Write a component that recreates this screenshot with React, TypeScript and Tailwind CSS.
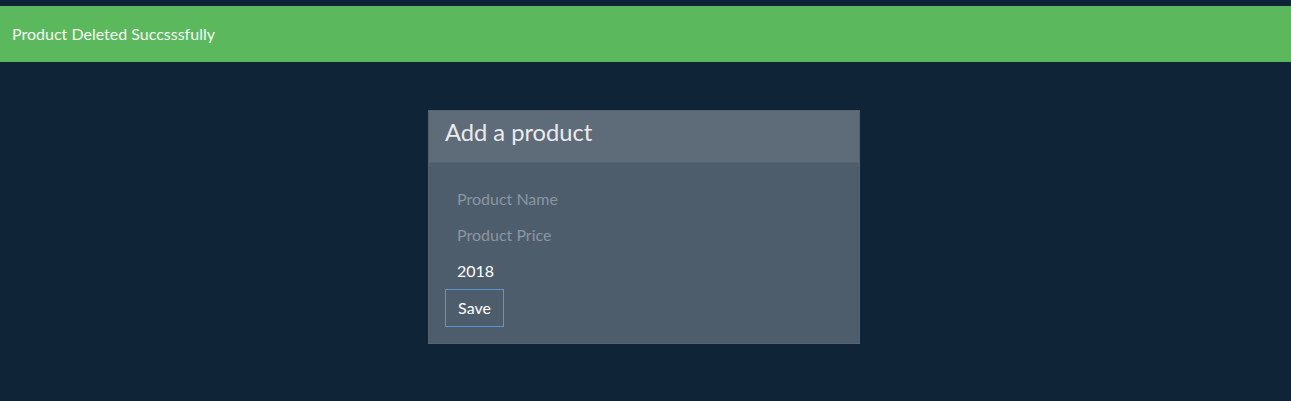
export default function App() {
  return (
    <div className="min-h-[401px] bg-[#0f2537] pt-[6px] font-['Lato','Liberation_Sans',sans-serif] text-white">
      <div className="flex h-[56px] items-center bg-[#5cb85c] px-3 text-[16px] text-[#f4fbf4]">
        Product Deleted Succsssfully
      </div>
      <div className="flex justify-center pt-[48px]">
        <div className="ml-[-3px] w-[432px] border border-[#56636f] bg-[#4e5d6c]">
          <div className="flex h-[52px] items-center border-b border-[#56636f] bg-[#5e6b79] px-4 pb-[7px] text-[23.7px] text-[#ebebeb]">
            Add a product
          </div>
          <div className="flex flex-col px-4 pt-[17px] pb-[16px]">
            <input
              className="h-9 bg-transparent px-3 text-[16px] text-white outline-none placeholder:text-[#8a96a2]"
              placeholder="Product Name"
            />
            <input
              className="h-9 bg-transparent px-3 text-[16px] text-white outline-none placeholder:text-[#8a96a2]"
              placeholder="Product Price"
            />
            <input
              className="h-9 bg-transparent px-3 text-[16px] text-white outline-none placeholder:text-[#8a96a2]"
              defaultValue="2018"
            />
            <div className="mt-px">
              <button className="h-[38px] w-[59px] border border-[#5b96d4] text-[16px] text-white">
                Save
              </button>
            </div>
          </div>
        </div>
      </div>
    </div>
  );
}
